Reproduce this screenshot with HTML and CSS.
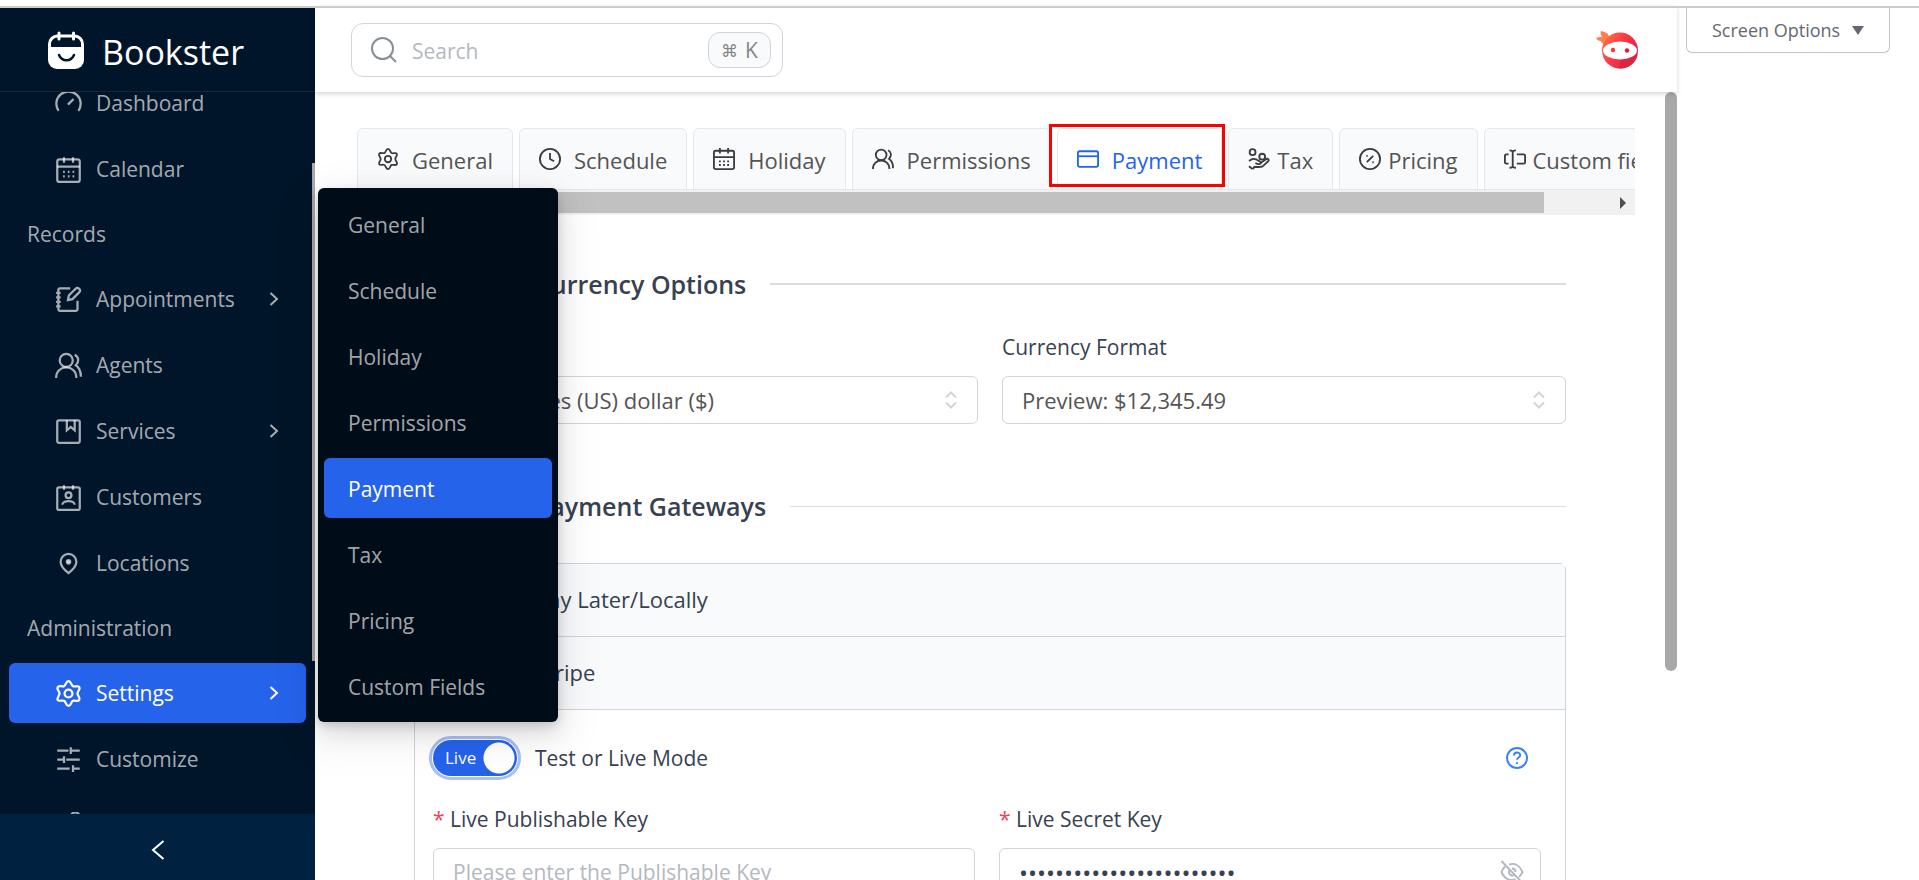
FILE: index.html
```html
<!DOCTYPE html>
<html lang="en">
<head>
    <meta charset="UTF-8">
    <meta name="viewport" content="width=device-width, initial-scale=1.0">
    <title>Bookster - Payment Settings</title>
    <link rel="stylesheet" href="styles.css">
</head>
<body>
    <div class="app">
        <aside class="sidebar">
            <div class="brand">
                <svg class="brand-logo" viewBox="0 0 36 38">
                    <path fill="#fff" d="M0 16h36v13a9 9 0 0 1-9 9H9a9 9 0 0 1-9-9z"/>
                    <path fill="none" stroke="#fff" stroke-width="3" d="M1.500 17v-4a8 8 0 0 1 8-8h17a8 8 0 0 1 8 8v4"/>
                    <path fill="none" stroke="#fff" stroke-width="3" stroke-linecap="round" d="M11 2v6M25.500 2v6"/>
                    <path fill="none" stroke="#001529" stroke-width="2.500" stroke-linecap="round" d="M11 24c3 7 12 7 15 0"/>
                </svg>
                <span class="brand-name">Bookster</span>
            </div>

            <nav class="menu">
                <ul class="menu-list">
                    <li><a class="menu-item" href="#">
                        <svg class="icon" viewBox="0 0 24 24"><path d="M3.200 18.500a10.800 10.800 0 1 1 17.600 0M11.500 13l5-5"/></svg>
                        <span>Dashboard</span></a></li>
                    <li><a class="menu-item" href="#">
                        <svg class="icon" viewBox="0 0 24 24"><rect x="2" y="3" width="20" height="20" rx="2"/><path d="M2 9.500h20M8 1v5M16 1v5"/><path stroke-dasharray="1.500 2.700" d="M7.200 14h10M7.200 18h10"/></svg>
                        <span>Calendar</span></a></li>
                    <li class="menu-group">Records</li>
                    <li><a class="menu-item" href="#">
                        <svg class="icon" viewBox="0 0 24 24"><path d="M13.500 2H4.500a1.500 1.500 0 0 0-1.500 1.500v17A1.500 1.500 0 0 0 4.500 22h14a1.500 1.500 0 0 0 1.500-1.500V13M1 6h4M1 10h4M1 14h4M1 18h4M11.500 12.500l.8-4 6-6a2 2 0 0 1 3.200 3.200l-6 6z"/></svg>
                        <span>Appointments</span>
                        <svg class="arrow" viewBox="0 0 10 14"><path d="M1.500 1l6.500 6-6.500 6"/></svg></a></li>
                    <li><a class="menu-item" href="#">
                        <svg class="icon" viewBox="0 0 24 24"><circle cx="10" cy="7.500" r="5.800"/><path d="M1 23c0-12.500 18-12.500 18 0M17.500 2.500c4 2 4 6.500 1 9.300 3 2 4.500 5.500 4.500 10.200"/></svg>
                        <span>Agents</span></a></li>
                    <li><a class="menu-item" href="#">
                        <svg class="icon" viewBox="0 0 24 24"><rect x="2" y="2" width="20" height="20" rx="1.500"/><path d="M10.500 2v9l3.500-3 3.500 3V2"/></svg>
                        <span>Services</span>
                        <svg class="arrow" viewBox="0 0 10 14"><path d="M1.500 1l6.500 6-6.500 6"/></svg></a></li>
                    <li><a class="menu-item" href="#">
                        <svg class="icon" viewBox="0 0 24 24"><rect x="2" y="3" width="20" height="20" rx="1.500"/><circle cx="12" cy="10" r="2.600"/><path d="M8 1v4M16 1v4M6.500 18.500c0-4.500 11-4.500 11 0"/></svg>
                        <span>Customers</span></a></li>
                    <li><a class="menu-item" href="#">
                        <svg class="icon" viewBox="0 0 24 24"><path d="M12 20.500c-4-3-7-6-7-10a7 7 0 0 1 14 0c0 4-3 7-7 10z"/><circle cx="12" cy="10.500" r="1.500" fill="currentColor"/></svg>
                        <span>Locations</span></a></li>
                    <li class="menu-group">Administration</li>
                    <li><a class="menu-item active" href="#">
                        <svg class="icon" viewBox="0 0 24 24"><circle cx="12" cy="12" r="3.500"/><path d="M12 1c2.500 0 2 3.500 4 4.500s4.500-1 5.600.8-1.600 3.500-1.600 5.700 2.800 3.700 1.600 5.700-3.600 0-5.600.8-1.500 4.500-4 4.500-2-3.500-4-4.500-4.500 1-5.600-.8 1.600-3.500 1.600-5.700-2.800-3.700-1.600-5.700 3.600 0 5.600-.8S9.500 1 12 1z"/></svg>
                        <span>Settings</span>
                        <svg class="arrow" viewBox="0 0 10 14"><path d="M1.500 1l6.500 6-6.500 6"/></svg></a></li>
                    <li><a class="menu-item" href="#">
                        <svg class="icon" viewBox="0 0 24 24"><path d="M2 4h10M14.500 4H22M14 1v6M2 12h5M10 12h12M8 9v6M2 20h11M16 20h6M16 17v6"/></svg>
                        <span>Customize</span></a></li>
                    <li><a class="menu-item" href="#" aria-label="License">
                        <svg class="icon" viewBox="0 0 24 24"><circle cx="18" cy="4" r="3.700"/><path d="M15.500 7L3 22"/></svg></a></li>
                </ul>
                <div class="menu-scroll"></div>
            </nav>

            <button class="collapse-btn" aria-label="Collapse menu">
                <svg viewBox="0 0 14 20"><path d="M12.500 1L2 10l10.500 9"/></svg>
            </button>
        </aside>

        <ul class="submenu">
            <li><a class="submenu-item" href="#">General</a></li>
            <li><a class="submenu-item" href="#">Schedule</a></li>
            <li><a class="submenu-item" href="#">Holiday</a></li>
            <li><a class="submenu-item" href="#">Permissions</a></li>
            <li><a class="submenu-item active" href="#">Payment</a></li>
            <li><a class="submenu-item" href="#">Tax</a></li>
            <li><a class="submenu-item" href="#">Pricing</a></li>
            <li><a class="submenu-item" href="#">Custom Fields</a></li>
        </ul>

        <main class="main">
            <header class="topbar">
                <label class="search">
                    <svg class="search-icon" viewBox="0 0 26 26"><circle cx="11.500" cy="11.500" r="10.500"/><path d="M19 19l6 6"/></svg>
                    <input class="search-input" type="text" placeholder="Search" aria-label="Search">
                    <kbd class="shortcut"><span>⌘</span><span>K</span></kbd>
                </label>
                <svg class="avatar" viewBox="0 0 42 38">
                    <defs>
                        <linearGradient id="face" x1="0" y1="0" x2="1" y2="0.6">
                            <stop offset="0" stop-color="#ff7a45"/>
                            <stop offset="0.5" stop-color="#fb3b46"/>
                            <stop offset="1" stop-color="#e11d48"/>
                        </linearGradient>
                    </defs>
                    <path fill="#ff7f4d" d="M5 0c5 1 8 3 8 6l-4 7c-3 0-4-2-4-3-2 0-4-1-5-3 2-1 4-1 6-1-1-2-2-4-1-6z"/>
                    <circle cx="24" cy="19.500" r="18" fill="url(#face)"/>
                    <path fill="#dc2640" d="M25 28l-2 9.500c9 .5 17-5 18.500-13.500C38 28 31 29 25 28z"/>
                    <ellipse cx="24" cy="19.500" rx="17" ry="9" fill="#fff"/>
                    <circle cx="17" cy="19" r="2.200" fill="#ef3b3b"/>
                    <circle cx="31" cy="19.500" r="2.200" fill="#d81f3d"/>
                </svg>
            </header>

            <div class="content">
                <div class="tabs">
                    <div class="tab-list">
                        <button class="tab">
                            <svg class="icon" viewBox="0 0 24 24"><circle cx="12" cy="12" r="3.500"/><path d="M12 1c2.500 0 2 3.500 4 4.500s4.500-1 5.600.8-1.600 3.500-1.600 5.700 2.800 3.700 1.600 5.700-3.600 0-5.600.8-1.500 4.500-4 4.500-2-3.500-4-4.500-4.500 1-5.600-.8 1.600-3.500 1.600-5.700-2.800-3.700-1.600-5.700 3.600 0 5.600-.8S9.500 1 12 1z"/></svg>
                            General</button>
                        <button class="tab">
                            <svg class="icon" viewBox="0 0 24 24"><circle cx="12" cy="12" r="11"/><path d="M12 5.500V12l4.500 2.500"/></svg>
                            Schedule</button>
                        <button class="tab">
                            <svg class="icon" viewBox="0 0 24 24"><rect x="1" y="3" width="22" height="20" rx="2"/><path d="M1 10h22M7.500 0v6M16.500 0v6"/><path stroke-dasharray="2 2.500" d="M6.500 14.500h12M6.500 18.500h12"/></svg>
                            Holiday</button>
                        <button class="tab">
                            <svg class="icon" viewBox="0 0 24 24"><circle cx="10" cy="7.500" r="5.800"/><path d="M1 23c0-12.500 18-12.500 18 0M17.500 2.500c4 2 4 6.500 1 9.300 3 2 4.500 5.500 4.500 10.200"/></svg>
                            Permissions</button>
                        <div class="tab-mark">
                            <button class="tab active">
                                <svg class="icon" viewBox="0 0 24 24"><rect x="1" y="3.500" width="22" height="17" rx="2"/><path d="M1 9h22"/></svg>
                                Payment</button>
                        </div>
                        <button class="tab tight">
                            <svg class="icon" viewBox="0 0 24 24"><circle cx="5" cy="4.500" r="3.200"/><circle cx="15.500" cy="9.500" r="3.200"/><path d="M1 14l4-2c4-1 6 2 9 3.500 1 1.500-1 2.500-3 2l-3-1M14 16l7-4.500c2 .5 2 2 1 3L16 20c-2 1-4 1-9 .5L5.500 23M1 20l4 3"/></svg>
                            Tax</button>
                        <button class="tab tight">
                            <svg class="icon" viewBox="0 0 24 24"><circle cx="12" cy="12" r="11"/><path d="M8.500 15.500l7-7M8 8.500h1.500M14.500 15.500H16"/></svg>
                            Pricing</button>
                        <button class="tab tight">
                            <svg class="icon" viewBox="0 0 24 24"><path d="M6 2.500c2.500 0 3.500.5 3.500 2v15c0 1.500-1 2-3.500 2M13 2.500c-2.500 0-3.500.5-3.500 2M9.500 19.500c0 1.500 1 2 3.500 2M5 7H2.500A1.500 1.500 0 0 0 1 8.500v7A1.500 1.500 0 0 0 2.500 17H5M14 7h7.500A1.500 1.500 0 0 1 23 8.500v7a1.500 1.500 0 0 1-1.500 1.500H14"/></svg>
                            Custom fields</button>
                    </div>
                    <div class="tab-scroll">
                        <span class="scroll-arrow left"></span>
                        <span class="scroll-thumb"></span>
                        <span class="scroll-arrow"></span>
                    </div>
                </div>

                <form class="settings">
                    <h2 class="divider strong">Currency Options</h2>
                    <div class="fields">
                        <div class="field">
                            <label for="currency">Currency</label>
                            <div class="select-box">
                                <select id="currency"><option>United States (US) dollar ($)</option></select>
                                <svg class="sort" viewBox="0 0 12 18"><path d="M1 6.500l5-5 5 5M1 11.500l5 5 5-5"/></svg>
                            </div>
                        </div>
                        <div class="field">
                            <label for="format">Currency Format</label>
                            <div class="select-box">
                                <select id="format"><option>Preview: $12,345.49</option></select>
                                <svg class="sort" viewBox="0 0 12 18"><path d="M1 6.500l5-5 5 5M1 11.500l5 5 5-5"/></svg>
                            </div>
                        </div>
                    </div>

                    <h2 class="divider gateways">Payment Gateways</h2>
                    <div class="panels">
                        <div class="panel-header">Pay Later/Locally</div>
                        <div class="panel-header">Stripe</div>
                        <div class="panel-body">
                            <div class="mode-row">
                                <span class="switch">
                                    <input id="mode" type="checkbox" role="switch" checked>
                                    <span class="switch-text">Live</span>
                                </span>
                                <label for="mode">Test or Live Mode</label>
                                <button class="help" type="button" aria-label="Help">
                                    <svg viewBox="0 0 22 22"><circle cx="11" cy="11" r="10"/><path d="M8 8.500c0-4 6.200-3.800 6.200-.3 0 2.300-3.200 2.300-3.200 4.600M11 15.200v1.800"/></svg>
                                </button>
                            </div>
                            <div class="fields">
                                <div class="field">
                                    <label for="publishable"><span class="required">*</span> Live Publishable Key</label>
                                    <input id="publishable" class="text-input" type="text" placeholder="Please enter the Publishable Key">
                                </div>
                                <div class="field">
                                    <label for="secret"><span class="required">*</span> Live Secret Key</label>
                                    <div class="password-box">
                                        <input id="secret" class="text-input" type="password" value="abcdefghijklmnopqrstuvwx">
                                        <button class="eye" type="button" aria-label="Show key">
                                            <svg viewBox="0 0 24 24"><path d="M1.500 1l20 21M9 4.500c6-2 11 1.500 13.500 7.500-.8 2-2 3.700-3.500 5M5 6.500C3.500 8 2.300 9.800 1.500 12c3 7 8.500 9.500 14 7.300M9.500 10c-2 3.500 1.500 7 5 5M12 8.500c2 0 3.500 1.500 3.500 3.500"/></svg>
                                        </button>
                                    </div>
                                </div>
                            </div>
                        </div>
                    </div>
                </form>
            </div>
            <div class="main-scroll"></div>
        </main>

        <div class="side-space">
            <button class="screen-options">Screen Options <span class="caret"></span></button>
        </div>
    </div>
</body>
</html>
```

FILE: styles.css
```css
* {
    box-sizing: border-box;
}

body {
    margin: 0;
    font-family: "Open Sans", "Noto Sans", sans-serif;
    font-size: 21px;
    color: #374151;
    background-color: #fff;
}

ul {
    list-style: none;
    margin: 0;
    padding: 0;
}

a {
    color: inherit;
    text-decoration: none;
}

button, input, select {
    font: inherit;
    color: inherit;
}

svg {
    fill: none;
    stroke: currentColor;
    stroke-width: 2;
    flex-shrink: 0;
}

.app {
    display: flex;
    position: relative;
    height: 100vh;
    padding-top: 6px;
    overflow: hidden;
}

.app::before {
    content: "";
    position: absolute;
    top: 6px;
    left: 0;
    right: 0;
    height: 2px;
    background-color: #ccc;
    z-index: 5;
}

/* sidebar */
.sidebar {
    display: flex;
    flex-direction: column;
    width: 315px;
    flex-shrink: 0;
    background-color: #001529;
    color: rgba(255, 255, 255, 0.65);
}

.brand {
    display: flex;
    align-items: center;
    gap: 18px;
    height: 86px;
    padding-left: 48px;
    padding-top: 2px;
    flex-shrink: 0;
    border-bottom: 1px solid #1c2630;
    color: #fff;
}

.brand-logo {
    width: 36px;
    height: 38px;
    stroke: none;
}

.brand-name {
    padding-top: 4px;
    font-size: 34px;
}

.menu {
    position: relative;
    flex: 1;
    overflow: hidden;
}

.menu-list {
    margin-top: -22px;
    padding-top: 3px;
}

.menu-item {
    display: flex;
    align-items: center;
    gap: 14px;
    height: 60px;
    margin: 0 9px 6px;
    padding: 0 27px 0 46px;
    border-radius: 6px;
}

.menu-item .icon {
    width: 27px;
    height: 27px;
    stroke-width: 2px;
}

.menu-item .arrow {
    width: 10px;
    height: 14px;
    margin-left: auto;
}

.menu-item.active,
.submenu-item.active {
    background-color: #2563eb;
    color: #fff;
}

.menu-group {
    height: 64px;
    line-height: 64px;
    padding-left: 27px;
    margin: -3px 0 3px;
}

.menu-scroll {
    position: absolute;
    top: 71px;
    right: 0;
    width: 3px;
    height: 69%;
    background-color: #a8a8a8;
}

.collapse-btn {
    height: 66px;
    flex-shrink: 0;
    border: 0;
    padding: 10px 0 0;
    background-color: #002140;
    color: #fff;
}

.collapse-btn svg {
    width: 14px;
    height: 20px;
}

/* flyout of the Settings item */
.submenu {
    position: absolute;
    top: 188px;
    left: 318px;
    width: 240px;
    padding: 6px;
    border-radius: 6px;
    background-color: #000c17;
    color: rgba(255, 255, 255, 0.65);
    box-shadow: 0 9px 24px rgba(0, 0, 0, 0.12), 0 4px 9px rgba(0, 0, 0, 0.12), 0 14px 42px 12px rgba(0, 0, 0, 0.05);
    z-index: 4;
}

.submenu-item {
    display: block;
    height: 60px;
    line-height: 62px;
    padding-left: 24px;
    border-radius: 6px;
}

.submenu li + li {
    margin-top: 6px;
}

/* main column */
.main {
    position: relative;
    flex: 1;
    min-width: 0;
}

.topbar {
    position: relative;
    display: flex;
    align-items: center;
    justify-content: space-between;
    height: 86px;
    padding: 2px 39px 0 36px;
    box-shadow: 0 2px 5px rgba(0, 0, 0, 0.16);
    z-index: 2;
}

.search {
    display: flex;
    align-items: center;
    gap: 15px;
    width: 432px;
    height: 54px;
    padding: 0 11px 0 19px;
    border: 1px solid #d1d5db;
    border-radius: 12px;
}

.search-icon {
    width: 26px;
    height: 26px;
    color: #868e96;
}

.search-input {
    flex: 1;
    min-width: 0;
    border: 0;
    padding: 2px 0 0;
    outline: none;
    background: none;
}

::placeholder {
    color: #b4b8bf;
    opacity: 1;
}

.shortcut {
    display: flex;
    align-items: center;
    justify-content: center;
    gap: 7px;
    width: 63px;
    height: 36px;
    border: 1px solid #d1d5db;
    border-radius: 12px;
    background-color: #f9fafb;
    color: #868686;
    font-family: "Open Sans", "DejaVu Sans", sans-serif;
    font-size: 21px;
}

.shortcut span:first-child {
    font-size: 17px;
}

.avatar {
    width: 42px;
    height: 38px;
    stroke: none;
}

.content {
    padding: 36px 42px 0;
}

/* the strip starts higher so that the frame of the marked tab is not clipped */
.tabs {
    margin-top: -6px;
}

.tab-list {
    display: flex;
    gap: 6px;
    box-sizing: content-box;
    height: 61px;
    padding-top: 6px;
    border-bottom: 1px solid #e5e7eb;
    overflow: hidden;
}

.tab {
    display: flex;
    align-items: center;
    gap: 13px;
    height: 62px;
    flex-shrink: 0;
    padding: 2px 19px 0;
    border: 1px solid #e5e7eb;
    border-radius: 6px 6px 0 0;
    background-color: #f9fafb;
    color: #545454;
    font-size: 22px;
    white-space: nowrap;
}

.tab .icon {
    width: 22px;
    height: 22px;
    margin-top: -2px;
    color: #3c3c3c;
}

.tab.tight {
    gap: 7px;
}

.tab.active,
.tab.active .icon {
    background-color: #fff;
    color: #2563eb;
}

.tab-mark {
    position: relative;
    flex-shrink: 0;
}

.tab-mark::after {
    content: "";
    position: absolute;
    inset: -4px -3px 2px -8px;
    border: 3px solid #f00;
    pointer-events: none;
}

.tab-scroll {
    display: flex;
    align-items: center;
    height: 25px;
    padding: 2px 0;
    background-color: #f1f1f1;
}

.scroll-thumb {
    flex: 1;
    height: 21px;
    margin: 0 76px 0 16px;
    background-color: #c1c1c1;
}

.scroll-arrow {
    border: 6px solid transparent;
    border-left-color: #505050;
    border-right-width: 0;
    margin-right: 9px;
}

.scroll-arrow.left {
    border-width: 6px 6px 6px 0;
    border-right-color: #a3a3a3;
    margin: 0 0 0 9px;
}

.settings {
    padding: 49px 69px 0 57px;
}

.divider {
    display: flex;
    align-items: center;
    gap: 24px;
    margin: 0;
    font-size: 25px;
    font-weight: 600;
    line-height: 40px;
}

.divider::before,
.divider::after {
    content: "";
    height: 1px;
    background-color: #d9dee2;
}

.divider::before {
    width: 97px;
}

.divider::after {
    flex: 1;
}

.divider.strong::before,
.divider.strong::after {
    height: 2px;
}

.divider.gateways {
    margin: 62px 0 37px;
}

.fields {
    display: grid;
    grid-template-columns: 1fr 1fr;
    gap: 24px;
    margin-top: 26px;
}

.field label {
    display: block;
    margin-bottom: 12px;
    line-height: 34px;
}

.select-box,
.password-box {
    position: relative;
}

.select-box select,
.text-input {
    display: block;
    width: 100%;
    height: 48px;
    padding: 0 19px;
    border: 1px solid #d1d5db;
    border-radius: 6px;
    background-color: #fff;
    appearance: none;
    outline: none;
}

.select-box select {
    color: #545454;
    font-size: 22px;
}

.text-input[type="password"] {
    font-size: 24px;
}

.sort {
    position: absolute;
    top: 15px;
    right: 21px;
    width: 12px;
    height: 18px;
    color: #d1d5db;
    pointer-events: none;
}

.panels {
    border: 1px solid #d1d5db;
    border-radius: 6px 6px 0 0;
}

.panel-header {
    height: 73px;
    line-height: 71px;
    padding-left: 120px;
    border-bottom: 1px solid #d1d5db;
    background-color: #f9fafb;
    font-size: 22px;
    font-weight: 500;
}

.panel-body {
    padding: 30px 24px 24px 18px;
}

.mode-row {
    display: flex;
    align-items: center;
    gap: 18px;
}

.switch {
    position: relative;
    height: 36px;
}

.switch input {
    display: block;
    width: 84px;
    height: 36px;
    margin: 0;
    appearance: none;
    border-radius: 18px;
    background: radial-gradient(circle at 66px 18px, #fff 15px, #2563eb 16px);
    outline: 3px solid #a8bff7;
    outline-offset: 1px;
}

.switch-text {
    position: absolute;
    top: 6px;
    left: 12px;
    color: #fff;
    font-size: 17px;
    line-height: 24px;
    pointer-events: none;
}

.help {
    margin-left: auto;
    margin-right: 13px;
    padding: 0;
    border: 0;
    background: none;
    color: #3b82f6;
    line-height: 0;
}

.help svg {
    width: 22px;
    height: 22px;
}

.required {
    color: #f43f5e;
}

.eye {
    position: absolute;
    top: 12px;
    right: 17px;
    padding: 0;
    border: 0;
    background: none;
    color: #b4b8bf;
    line-height: 0;
}

.eye svg {
    width: 24px;
    height: 24px;
}

.main-scroll {
    position: absolute;
    top: 86px;
    right: 0;
    width: 12px;
    height: 579px;
    border-radius: 6px;
    background-color: #a8a8a8;
}

/* WordPress strip at the right */
.side-space {
    width: 242px;
    flex-shrink: 0;
    padding-left: 9px;
}

.screen-options {
    display: flex;
    align-items: center;
    gap: 12px;
    height: 47px;
    padding: 2px 25px 0;
    border: 1px solid #c3c4c7;
    border-top: 0;
    border-radius: 0 0 6px 6px;
    background-color: #fff;
    color: #646970;
    font-size: 18px;
}

.caret {
    border: 6px solid transparent;
    border-top: 9px solid #646970;
    border-bottom: 0;
}
```
